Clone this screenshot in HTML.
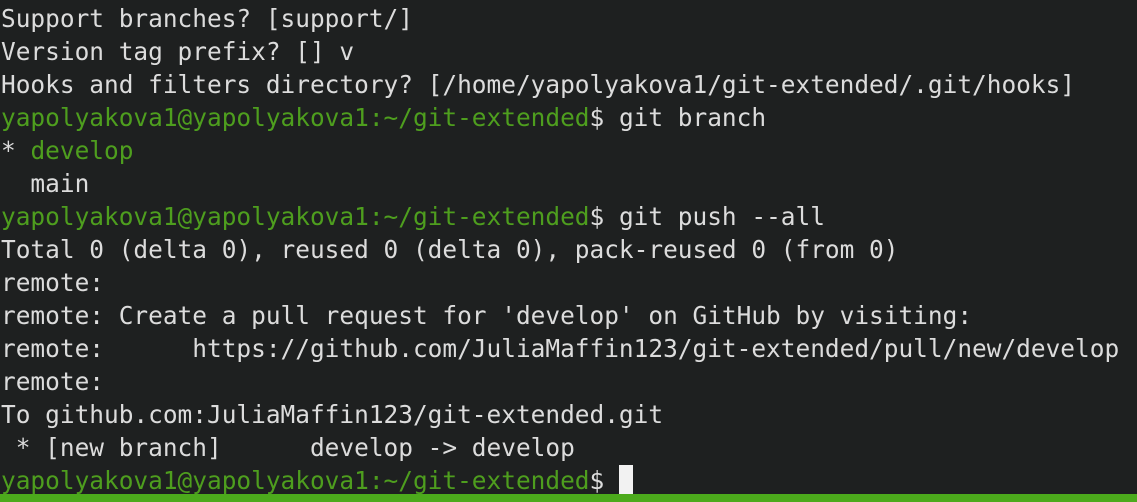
<!DOCTYPE html>
<html><head><style>
html,body{margin:0;padding:0;background:#1e2020;width:1137px;height:502px;overflow:hidden}
pre{margin:0;padding:2px 0 0 1px;font-family:"DejaVu Sans Mono","Liberation Mono",monospace;font-size:24.45px;line-height:33px;color:#dcdcdc;white-space:pre}
.g{color:#4e9e1e}
.cur{display:inline-block;width:14px;height:31px;background:#f2f2f2;vertical-align:-7px}
.bar{position:absolute;left:0;top:494px;width:1137px;height:8px;background:#4caa1c}
</style></head><body>
<pre>Support branches? [support/]
Version tag prefix? [] v
Hooks and filters directory? [/home/yapolyakova1/git-extended/.git/hooks]
<span class="g">yapolyakova1@yapolyakova1:~/git-extended</span>$ git branch
* <span class="g">develop</span>
  main
<span class="g">yapolyakova1@yapolyakova1:~/git-extended</span>$ git push --all
Total 0 (delta 0), reused 0 (delta 0), pack-reused 0 (from 0)
remote:
remote: Create a pull request for 'develop' on GitHub by visiting:
remote:      https://github.com/JuliaMaffin123/git-extended/pull/new/develop
remote:
To github.com:JuliaMaffin123/git-extended.git
 * [new branch]      develop -&gt; develop
<span class="g">yapolyakova1@yapolyakova1:~/git-extended</span>$ <span class="cur"></span></pre>
<div class="bar"></div>
</body></html>
